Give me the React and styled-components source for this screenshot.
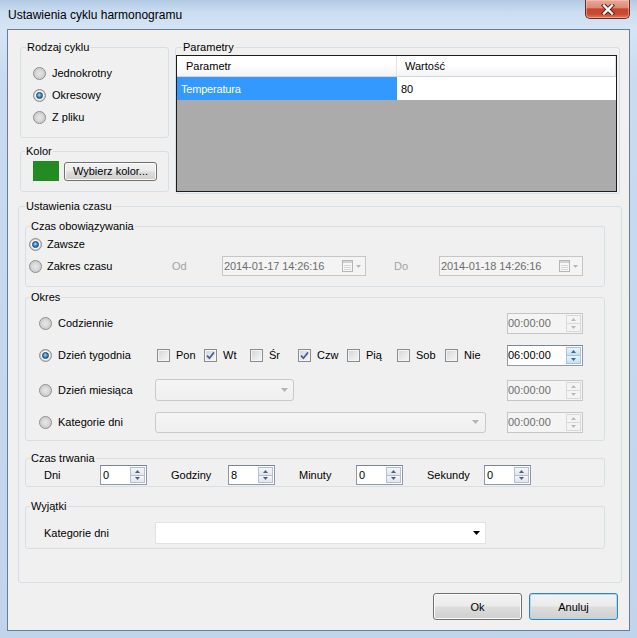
import React from 'react';
import styled, { createGlobalStyle } from 'styled-components';

const GlobalStyle = createGlobalStyle`
  html, body { margin: 0; padding: 0; }
  body {
    font-family: "Liberation Sans", Arial, sans-serif;
    font-size: 11px;
    color: #000;
    background: #c4d8ee;
  }
  * { box-sizing: border-box; }
`;

const Window = styled.div`
  width: 637px;
  height: 638px;
  display: flex;
  flex-direction: column;
  padding: 0 7px 7px;
  overflow: hidden;
  background: linear-gradient(180deg, #b3cbe6 0px, #cadcf0 12px, #d6e5f5 28px, #c8dbef 80px, #c0d5ec 100%);
`;

const TitleBar = styled.div`
  height: 29px;
  display: flex;
  align-items: flex-start;
  justify-content: space-between;
`;

const Title = styled.div`
  font-size: 12px;
  line-height: 15px;
  margin: 8px 0 0 1px;
`;

const CloseButton = styled.div`
  width: 45px;
  height: 19px;
  border: 1px solid #6e2a20;
  border-top: none;
  border-radius: 0 0 5px 5px;
  background: linear-gradient(180deg, #e9a896 0%, #dc8b77 42%, #c8452e 50%, #c94a31 78%, #dc7a62 100%);
  box-shadow: inset 0 0 0 1px rgba(255, 210, 200, 0.45);
  display: flex;
  align-items: center;
  justify-content: center;
`;

const Client = styled.div`
  flex: 1;
  border: 1px solid #6a7d96;
  background: #f0f0f0;
  display: flex;
  flex-direction: column;
  padding: 11px 7px 0 10px;
`;

const TopRow = styled.div`
  display: flex;
  gap: 6px;
  margin: 0 2px;
  height: 153px;
`;

const LeftColumn = styled.div`
  width: 149px;
  display: flex;
  flex-direction: column;
  gap: 7px;
`;

const GroupBox = styled.fieldset`
  margin: ${p => p.$mt || 0}px 0 0 0;
  padding: 0;
  min-width: 0;
  border: 1px solid #d5dfe5;
  border-radius: 3px;
  height: ${p => p.$h}px;
  flex: ${p => (p.$grow ? 1 : 'none')};
`;

const Legend = styled.legend`
  margin-left: ${p => p.$ml ?? 4}px;
  padding: 0 1px;
  line-height: 13px;
  font-size: 11px;
`;

const GroupContent = styled.div`
  display: flex;
  flex-direction: column;
  padding: ${p => p.$pad || '0'};
`;

const Option = styled.div`
  display: flex;
  align-items: center;
  gap: ${p => p.$gap ?? 5}px;
  width: ${p => (p.$w ? `${p.$w}px` : 'auto')};
  flex-shrink: 0;
  white-space: nowrap;
`;

const RadioMark = styled.span`
  width: 13px;
  height: 13px;
  border-radius: 50%;
  flex-shrink: 0;
  border: 1px solid #8b8c8c;
  background: radial-gradient(circle at 50% 50%, #e6e6e6 0, #dadada 40%, #cdcdcd 62%, #f6f6f6 100%);
  display: flex;
  align-items: center;
  justify-content: center;
`;

const RadioDot = styled.span`
  width: 7px;
  height: 7px;
  border-radius: 50%;
  border: 1px solid #1d4a77;
  background: radial-gradient(circle at 45% 40%, #a6e2ff 0, #3b8fd0 45%, #195084 100%);
  box-shadow: 0 0 0 1px #fff;
`;

const CheckMark = styled.span`
  width: 13px;
  height: 13px;
  flex-shrink: 0;
  border: 1px solid #8b8c8c;
  background: linear-gradient(135deg, #cfd2d7 0%, #e6e7e9 50%, #f7f7f7 100%);
  box-shadow: inset 0 0 0 1px #f4f4f4;
  display: flex;
  align-items: center;
  justify-content: center;
`;

const Swatch = styled.div`
  width: 26px;
  height: 20px;
  background: ${p => p.$color};
`;

const Button = styled.div`
  width: ${p => p.$w}px;
  height: ${p => p.$h}px;
  border: 1px solid ${p => (p.$default ? '#3c7fb1' : '#707070')};
  border-radius: 3px;
  background: linear-gradient(180deg, #f2f2f2 0%, #ebebeb 48%, #dddddd 52%, #cfcfcf 100%);
  box-shadow: inset 0 0 0 1px ${p => (p.$default ? '#a8dcf5' : '#fbfbfb')};
  display: flex;
  align-items: center;
  justify-content: center;
  flex-shrink: 0;
  margin-left: ${p => p.$ml || 0}px;
`;

const ColorRow = styled.div`
  display: flex;
  align-items: center;
  height: 20px;
  padding-left: 12px;
`;

const Grid = styled.div`
  margin: 1px 2px 0 0;
  height: 137px;
  border: 1px solid #1c1c1c;
  background: #ababab;
  display: flex;
  flex-direction: column;
`;

const GridLine = styled.div`
  display: grid;
  grid-template-columns: 220px 1fr;
  height: ${p => p.$h}px;
  flex-shrink: 0;
`;

const HeaderCell = styled.div`
  display: flex;
  align-items: center;
  padding-left: ${p => p.$pl}px;
  background: linear-gradient(180deg, #ffffff 0%, #ffffff 45%, #f3f4f6 100%);
  border-bottom: 1px solid #d5d5d5;
  border-right: 1px solid #e1e3e6;
`;

const Cell = styled.div`
  display: flex;
  align-items: center;
  padding-left: 4px;
  background: ${p => (p.$selected ? '#3399ff' : '#ffffff')};
  color: ${p => (p.$selected ? '#ffffff' : '#000000')};
  font-size: 11px;
  letter-spacing: -0.2px;
`;

const Row = styled.div`
  display: flex;
  align-items: center;
  height: ${p => p.$h}px;
  padding-left: ${p => p.$pl || 0}px;
  padding-right: ${p => p.$pr || 0}px;
  flex-shrink: 0;
`;

const DimText = styled.span`
  color: #a2a2a2;
  width: ${p => p.$w}px;
  margin-left: ${p => p.$ml || 0}px;
  flex-shrink: 0;
`;

const Field = styled.div`
  width: ${p => p.$w}px;
  height: ${p => p.$h || 20}px;
  flex-shrink: 0;
  display: flex;
  align-items: stretch;
  border: 1px solid ${p => (p.$disabled ? '#c6c6c6' : '#8e9aa8')};
  border-top-color: ${p => (p.$disabled ? '#c6c6c6' : '#7a8595')};
  background: ${p => (p.$disabled ? '#f4f4f4' : '#ffffff')};
  color: ${p => (p.$disabled ? '#6d6d6d' : '#000')};
  margin-left: ${p => (p.$auto ? 'auto' : `${p.$ml || 0}px`)};
  margin-right: ${p => p.$mr || 0}px;
`;

const FieldText = styled.span`
  flex: 1;
  display: flex;
  align-items: center;
  padding-left: ${p => p.$pl ?? 1}px;
  font-size: 11px;
  letter-spacing: ${p => p.$ls ?? 0}px;
  overflow: hidden;
  white-space: nowrap;
`;

const Spinner = styled.div`
  width: 15px;
  margin: 1px;
  display: flex;
  flex-direction: column;
`;

const SpinButton = styled.div`
  flex: 1;
  display: flex;
  align-items: center;
  justify-content: center;
  border: 1px solid ${p => (p.$disabled ? '#d9d9d9' : '#b3c0d2')};
  background: ${p =>
    p.$disabled
      ? '#f4f4f4'
      : p.$hot
      ? 'linear-gradient(180deg, #e8f5fd, #bfe2f8)'
      : 'linear-gradient(180deg, #f4f6f8, #dfe5ec)'};
  & + & { border-top: none; }
`;

const DateIcon = styled.div`
  display: flex;
  align-items: center;
  gap: 3px;
  padding-right: 4px;
`;

const Combo = styled.div`
  width: ${p => p.$w}px;
  height: ${p => p.$h}px;
  flex-shrink: 0;
  margin-left: ${p => p.$ml || 0}px;
  border: 1px solid ${p => (p.$disabled ? '#c9c9c9' : '#e2e2e2')};
  border-radius: ${p => (p.$disabled ? 3 : 0)}px;
  background: ${p => (p.$disabled ? 'linear-gradient(180deg, #f5f5f5, #efefef)' : '#ffffff')};
  display: flex;
  align-items: center;
  justify-content: flex-end;
  padding-right: ${p => p.$pr || 6}px;
`;

const CheckGroup = styled.div`
  display: flex;
  align-items: center;
  margin-left: 2px;
`;

const DurationLabel = styled.span`
  width: ${p => p.$w}px;
  flex-shrink: 0;
`;

const ButtonRow = styled.div`
  display: flex;
  justify-content: flex-end;
  gap: 7px;
  margin-top: 10px;
  padding-right: 4px;
`;

const Tri = ({ up, color = '#4d6185', w = 5, h = 3 }) => (
  <svg width={w} height={h} viewBox={`0 0 ${w} ${h}`}>
    <path d={up ? `M0 ${h} L${w / 2} 0 L${w} ${h}Z` : `M0 0 L${w} 0 L${w / 2} ${h}Z`} fill={color} />
  </svg>
);

const Radio = ({ checked, label, w, gap }) => (
  <Option $w={w} $gap={gap}>
    <RadioMark>{checked && <RadioDot />}</RadioMark>
    <span>{label}</span>
  </Option>
);

const Check = ({ checked, label, w }) => (
  <Option $w={w} $gap={6}>
    <CheckMark>
      {checked && (
        <svg width="9" height="9" viewBox="0 0 9 9">
          <path d="M1 4.6 L3.4 7.2 L8 1.4" fill="none" stroke="#4a5e9a" strokeWidth="1.7" />
        </svg>
      )}
    </CheckMark>
    <span>{label}</span>
  </Option>
);

const SpinField = ({ value, w, disabled, hot, auto, mr, ml, h }) => (
  <Field $w={w} $h={h} $disabled={disabled} $auto={auto} $mr={mr} $ml={ml}>
    <FieldText $pl={value.length > 2 ? 0 : 2}>{value}</FieldText>
    <Spinner>
      <SpinButton $disabled={disabled} $hot={hot}>
        <Tri up color={disabled ? '#b9b9b9' : '#4d6185'} />
      </SpinButton>
      <SpinButton $disabled={disabled} $hot={hot}>
        <Tri color={disabled ? '#b9b9b9' : '#4d6185'} />
      </SpinButton>
    </Spinner>
  </Field>
);

const DateField = ({ value, ml }) => (
  <Field $w={144} $h={20} $disabled $ml={ml}>
    <FieldText $pl={1} $ls={-0.1}>{value}</FieldText>
    <DateIcon>
      <svg width="11" height="12" viewBox="0 0 11 12">
        <rect x="0.5" y="0.5" width="10" height="11" fill="#f7f7f7" stroke="#b5b5b5" />
        <rect x="1" y="1" width="9" height="2" fill="#d2d2d2" />
        <path d="M2 5.5h7M2 7.5h7M2 9.5h7" stroke="#d6d6d6" />
      </svg>
      <Tri color="#b5b5b5" w={5} h={3} />
    </DateIcon>
  </Field>
);

const days = [
  { label: 'Pon', checked: false, w: 47 },
  { label: 'Wt', checked: true, w: 46 },
  { label: 'Śr', checked: false, w: 48 },
  { label: 'Czw', checked: true, w: 49 },
  { label: 'Pią', checked: false, w: 50 },
  { label: 'Sob', checked: false, w: 48 },
  { label: 'Nie', checked: false },
];

const durations = [
  { label: 'Dni', value: '0', lw: 56 },
  { label: 'Godziny', value: '8', lw: 57 },
  { label: 'Minuty', value: '0', lw: 57 },
  { label: 'Sekundy', value: '0', lw: 57 },
];

export default function App() {
  return (
    <>
      <GlobalStyle />
      <Window>
        <TitleBar>
          <Title>Ustawienia cyklu harmonogramu</Title>
          <CloseButton>
            <svg width="14" height="11" viewBox="0 0 14 11">
              <path d="M3 1.5 L11 9.5 M11 1.5 L3 9.5" stroke="#5a1c14" strokeWidth="4.2" strokeLinecap="square" />
              <path d="M3 1.5 L11 9.5 M11 1.5 L3 9.5" stroke="#ffffff" strokeWidth="2.4" strokeLinecap="square" />
            </svg>
          </CloseButton>
        </TitleBar>
        <Client>
          <TopRow>
            <LeftColumn>
              <GroupBox $h={97}>
                <Legend $ml={5}>Rodzaj cyklu</Legend>
                <GroupContent $pad="8px 0 0 12px">
                  <Row $h={22}><Radio label="Jednokrotny" gap={6} /></Row>
                  <Row $h={22}><Radio label="Okresowy" checked gap={6} /></Row>
                  <Row $h={22}><Radio label="Z pliku" gap={6} /></Row>
                </GroupContent>
              </GroupBox>
              <GroupBox $h={47}>
                <Legend $ml={4}>Kolor</Legend>
                <GroupContent $pad="3px 0 0 0">
                  <ColorRow>
                    <Swatch $color="#228b22" />
                    <Button $w={93} $h={19} $ml={5}>Wybierz kolor...</Button>
                  </ColorRow>
                </GroupContent>
              </GroupBox>
            </LeftColumn>
            <GroupBox $h={153} $grow>
              <Legend $ml={6}>Parametry</Legend>
              <Grid>
                <GridLine $h={21}>
                  <HeaderCell $pl={9}>Parametr</HeaderCell>
                  <HeaderCell $pl={8}>Wartość</HeaderCell>
                </GridLine>
                <GridLine $h={23}>
                  <Cell $selected>Temperatura</Cell>
                  <Cell>80</Cell>
                </GridLine>
              </Grid>
            </GroupBox>
          </TopRow>

          <GroupBox $h={383} $mt={6}>
            <Legend $ml={6}>Ustawienia czasu</Legend>
            <GroupContent $pad="7px 16px 0 6px">
              <GroupBox $h={67}>
                <Legend $ml={4}>Czas obowiązywania</Legend>
                <GroupContent $pad="0 0 0 3px">
                  <Row $h={22}><Radio label="Zawsze" checked /></Row>
                  <Row $h={22}>
                    <Radio label="Zakres czasu" w={143} />
                    <DimText $w={50}>Od</DimText>
                    <DateField value="2014-01-17 14:26:16" />
                    <DimText $w={45} $ml={28}>Do</DimText>
                    <DateField value="2014-01-18 14:26:16" />
                  </Row>
                </GroupContent>
              </GroupBox>

              <GroupBox $h={150} $mt={4}>
                <Legend $ml={4}>Okres</Legend>
                <GroupContent $pad="3px 0 0 0">
                  <Row $h={32} $pl={13} $pr={21}>
                    <Radio label="Codziennie" w={116} gap={6} />
                    <SpinField value="00:00:00" w={76} h={21} disabled auto />
                  </Row>
                  <Row $h={32} $pl={13} $pr={21}>
                    <Radio label="Dzień tygodnia" checked w={116} gap={6} />
                    <CheckGroup>
                      {days.map(d => (
                        <Check key={d.label} label={d.label} checked={d.checked} w={d.w} />
                      ))}
                    </CheckGroup>
                    <SpinField value="06:00:00" w={76} h={21} hot auto />
                  </Row>
                  <Row $h={38} $pl={13} $pr={21}>
                    <Radio label="Dzień miesiąca" w={116} gap={6} />
                    <Combo $w={139} $h={22} $disabled $pr={5}>
                      <Tri color="#b4b4b4" w={7} h={4} />
                    </Combo>
                    <SpinField value="00:00:00" w={76} h={21} disabled auto />
                  </Row>
                  <Row $h={26} $pl={13} $pr={21}>
                    <Radio label="Kategorie dni" w={116} gap={6} />
                    <Combo $w={331} $h={21} $disabled $pr={6}>
                      <Tri color="#b4b4b4" w={7} h={4} />
                    </Combo>
                    <SpinField value="00:00:00" w={76} h={21} disabled auto />
                  </Row>
                </GroupContent>
              </GroupBox>

              <GroupBox $h={35} $mt={11}>
                <Legend $ml={4}>Czas trwania</Legend>
                <GroupContent $pad="0 0 0 18px">
                  <Row $h={20}>
                    {durations.map(d => (
                      <React.Fragment key={d.label}>
                        <DurationLabel $w={d.lw}>{d.label}</DurationLabel>
                        <SpinField value={d.value} w={47} h={20} mr={24} />
                      </React.Fragment>
                    ))}
                  </Row>
                </GroupContent>
              </GroupBox>

              <GroupBox $h={49} $mt={13}>
                <Legend $ml={4}>Wyjątki</Legend>
                <GroupContent $pad="9px 0 0 18px">
                  <Row $h={22}>
                    <DurationLabel $w={111}>Kategorie dni</DurationLabel>
                    <Combo $w={331} $h={22} $pr={5}>
                      <Tri color="#000000" w={7} h={4} />
                    </Combo>
                  </Row>
                </GroupContent>
              </GroupBox>
            </GroupContent>
          </GroupBox>

          <ButtonRow>
            <Button $w={89} $h={27}>Ok</Button>
            <Button $w={89} $h={27} $default>Anuluj</Button>
          </ButtonRow>
        </Client>
      </Window>
    </>
  );
}
